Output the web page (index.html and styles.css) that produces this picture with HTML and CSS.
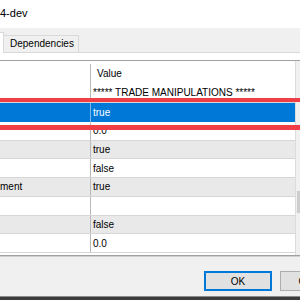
FILE: index.html
```html
<!DOCTYPE html>
<html lang="en">
<head>
    <meta charset="UTF-8">
    <title>4-dev</title>
    <link rel="stylesheet" href="styles.css">
</head>
<body>
    <div class="titlebar">4-dev</div>

    <div class="dialog">
        <div class="tabs">
            <div class="tab active"></div>
            <div class="tab">Dependencies</div>
        </div>

        <div class="page">
            <div class="grid">
                <div class="rows">
                    <div class="row header"><div class="name"></div><div class="value">Value</div></div>
                    <div class="row first"><div class="name"></div><div class="value">***** TRADE MANIPULATIONS *****</div></div>
                    <div class="row selected"><div class="name"></div><div class="value">true</div></div>
                    <div class="row"><div class="name"></div><div class="value">0.0</div></div>
                    <div class="row alt"><div class="name"></div><div class="value">true</div></div>
                    <div class="row"><div class="name"></div><div class="value">false</div></div>
                    <div class="row alt"><div class="name">ment</div><div class="value">true</div></div>
                    <div class="row"><div class="name"></div><div class="value"></div></div>
                    <div class="row alt"><div class="name"></div><div class="value">false</div></div>
                    <div class="row"><div class="name"></div><div class="value">0.0</div></div>
                    <div class="filler"></div>
                </div>
                <div class="scrollbar"><div class="thumb"></div></div>
            </div>
        </div>

        <div class="buttons">
            <button class="btn default">OK</button>
            <button class="btn">Cancel</button>
        </div>
    </div>

    <div class="desktop"></div>

    <!-- annotation marks drawn over the screenshot -->
    <div class="mark mark-top"></div>
    <div class="mark mark-bottom"></div>
</body>
</html>
```

FILE: styles.css
```css
html, body {
    margin: 0;
}
body {
    position: relative;
    width: 300px;
    height: 300px;
    overflow: hidden;
    font-family: "Liberation Sans", Arial, sans-serif;
    font-size: 10px;
    color: #000;
    background: #f0f0f0;
}
.titlebar {
    height: 28px;
    background: #fff;
    font-size: 11px;
    line-height: 26px;
    white-space: nowrap;
}
.dialog {
    height: 268px;
    background: #f0f0f0;
}
.tabs {
    display: flex;
    align-items: flex-end;
    height: 24px;
}
.tab {
    box-sizing: border-box;
    height: 17px;
    padding: 0 4px 0 6px;
    border: 1px solid #d9d9d9;
    border-left: none;
    border-bottom: none;
    line-height: 16px;
    background: #f0f0f0;
    white-space: nowrap;
}
.tab.active {
    position: relative;
    z-index: 1;
    width: 40px;
    height: 21px;
    margin-left: -36px;
    margin-bottom: -1px;
    padding: 0;
    border-left: 1px solid #d9d9d9;
    background: #fff;
}
.page {
    padding-top: 7px;
    background: #fff;
    border-top: 1px solid #d9d9d9;
    border-bottom: 1px solid #d0d0d0;
}
.grid {
    display: flex;
    box-sizing: border-box;
    width: 312px;
    height: 196px;
    border-top: 1px solid #a0a0a0;
    border-bottom: 1px solid #a0a0a0;
}
.rows {
    display: flex;
    flex-direction: column;
    width: 295px;
}
.row {
    display: flex;
    flex: none;
    box-sizing: border-box;
    height: 18.714px;
    border-bottom: 1px solid #d6d6d6;
}
.row.alt {
    background: #e9e9e9;
}
.row.header {
    height: 22px;
    padding-top: 3px;
    border-bottom: none;
}
.row.first {
    height: 20px;
}
.row.selected {
    height: 19px;
    border-bottom: none;
    background: #0078d7;
    color: #fff;
}
.name {
    display: flex;
    align-items: center;
    flex: none;
    box-sizing: border-box;
    width: 91px;
    border-right: 1px solid #b9b9b9;
    overflow: hidden;
    white-space: nowrap;
}
.selected .name {
    border-right-color: #7fb6e6;
}
.value {
    display: flex;
    align-items: center;
    padding-left: 2px;
    white-space: nowrap;
}
.header .value {
    padding-left: 6px;
}
.filler {
    flex: 1;
}
.scrollbar {
    box-sizing: border-box;
    width: 17px;
    padding-top: 130px;
    background: #f0f0f0;
    border-left: 1px solid #dcdcdc;
}
.thumb {
    height: 22px;
    margin-left: 1px;
    background: #cdcdcd;
}
.buttons {
    display: flex;
    gap: 8px;
    padding: 14px 0 0 204px;
}
.btn {
    flex: none;
    box-sizing: border-box;
    width: 68px;
    height: 20px;
    padding: 0;
    font-family: inherit;
    font-size: 10px;
    color: #000;
    background: #e1e1e1;
    border: 1px solid #adadad;
}
.btn.default {
    border: 2px solid #0078d7;
}
.desktop {
    height: 4px;
    box-sizing: border-box;
    border-top: 1px solid #8a8a8a;
    background: #3c3c3c;
}
.mark {
    position: absolute;
    left: 0;
    width: 300px;
    background: #ef3e45;
}
.mark-top {
    top: 98px;
    height: 4px;
}
.mark-bottom {
    top: 125px;
    height: 5px;
}
```
